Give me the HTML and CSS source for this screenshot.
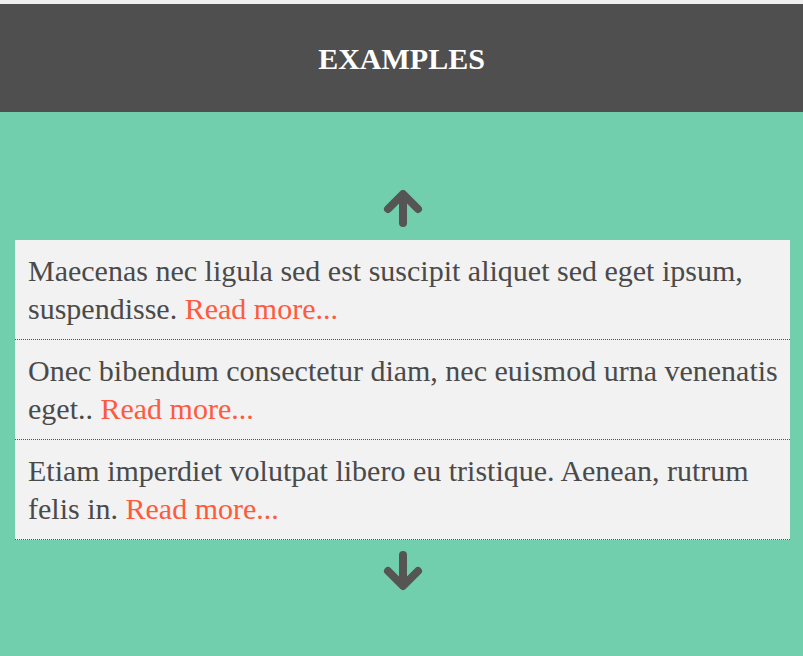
FILE: index.html
```html
<!DOCTYPE html>
<html>
<head>
<meta charset="utf-8">
<link rel="stylesheet" href="styles.css">
</head>
<body>
<div class="topstrip"></div>
<header class="header"><h1 class="title">EXAMPLES</h1></header>
<main class="main">
  <div class="arrow arrow-up">
    <svg width="40" height="38" viewBox="0 0 40 38"><path d="M20 33 V6 M5 19 L20 4 L35 19" fill="none" stroke="#555" stroke-width="8" stroke-linecap="round" stroke-linejoin="round"/></svg>
  </div>
  <ul class="list">
    <li class="item">Maecenas nec ligula sed est suscipit aliquet sed eget ipsum, suspendisse. <a class="more" href="#">Read more...</a></li>
    <li class="item">Onec bibendum consectetur diam, nec euismod urna venenatis eget.. <a class="more" href="#">Read more...</a></li>
    <li class="item">Etiam imperdiet volutpat libero eu tristique. Aenean, rutrum felis in. <a class="more" href="#">Read more...</a></li>
  </ul>
  <div class="arrow arrow-down">
    <svg width="40" height="40" viewBox="0 0 40 40"><path d="M20 4 V32 M5 20 L20 35 L35 20" fill="none" stroke="#555" stroke-width="8" stroke-linecap="round" stroke-linejoin="round"/></svg>
  </div>
</main>
</body>
</html>
```
FILE: styles.css
```css
html, body {
  margin: 0;
  padding: 0;
  height: 100%;
}
body {
  background: #72cfae;
  font-family: "Liberation Serif", "Times New Roman", serif;
}
.topstrip {
  height: 4px;
  background: #efefef;
}
.header {
  background: #4f4f4f;
  height: 108px;
  display: flex;
  align-items: center;
  justify-content: center;
}
.title {
  margin: 0;
  color: #fff;
  font-size: 30px;
  font-weight: bold;
  position: relative;
  top: 1px;
}
.main {
  padding: 78px 13px 0 15px;
  display: flex;
  flex-direction: column;
}
.arrow {
  display: flex;
  justify-content: center;
  height: 50px;
}
.arrow-up svg { margin-top: 0; }
.arrow-down svg { margin-top: 11px; }
.list {
  list-style: none;
  margin: 0;
  padding: 0;
  background: #f2f2f2;
}
.item {
  color: #4a4a4a;
  font-size: 30px;
  line-height: 38px;
  padding: 12px 4px 11px 13px;
  border-bottom: 1px dotted #3d5f52;
}
.more {
  color: #ff5a3d;
  text-decoration: none;
}
```
